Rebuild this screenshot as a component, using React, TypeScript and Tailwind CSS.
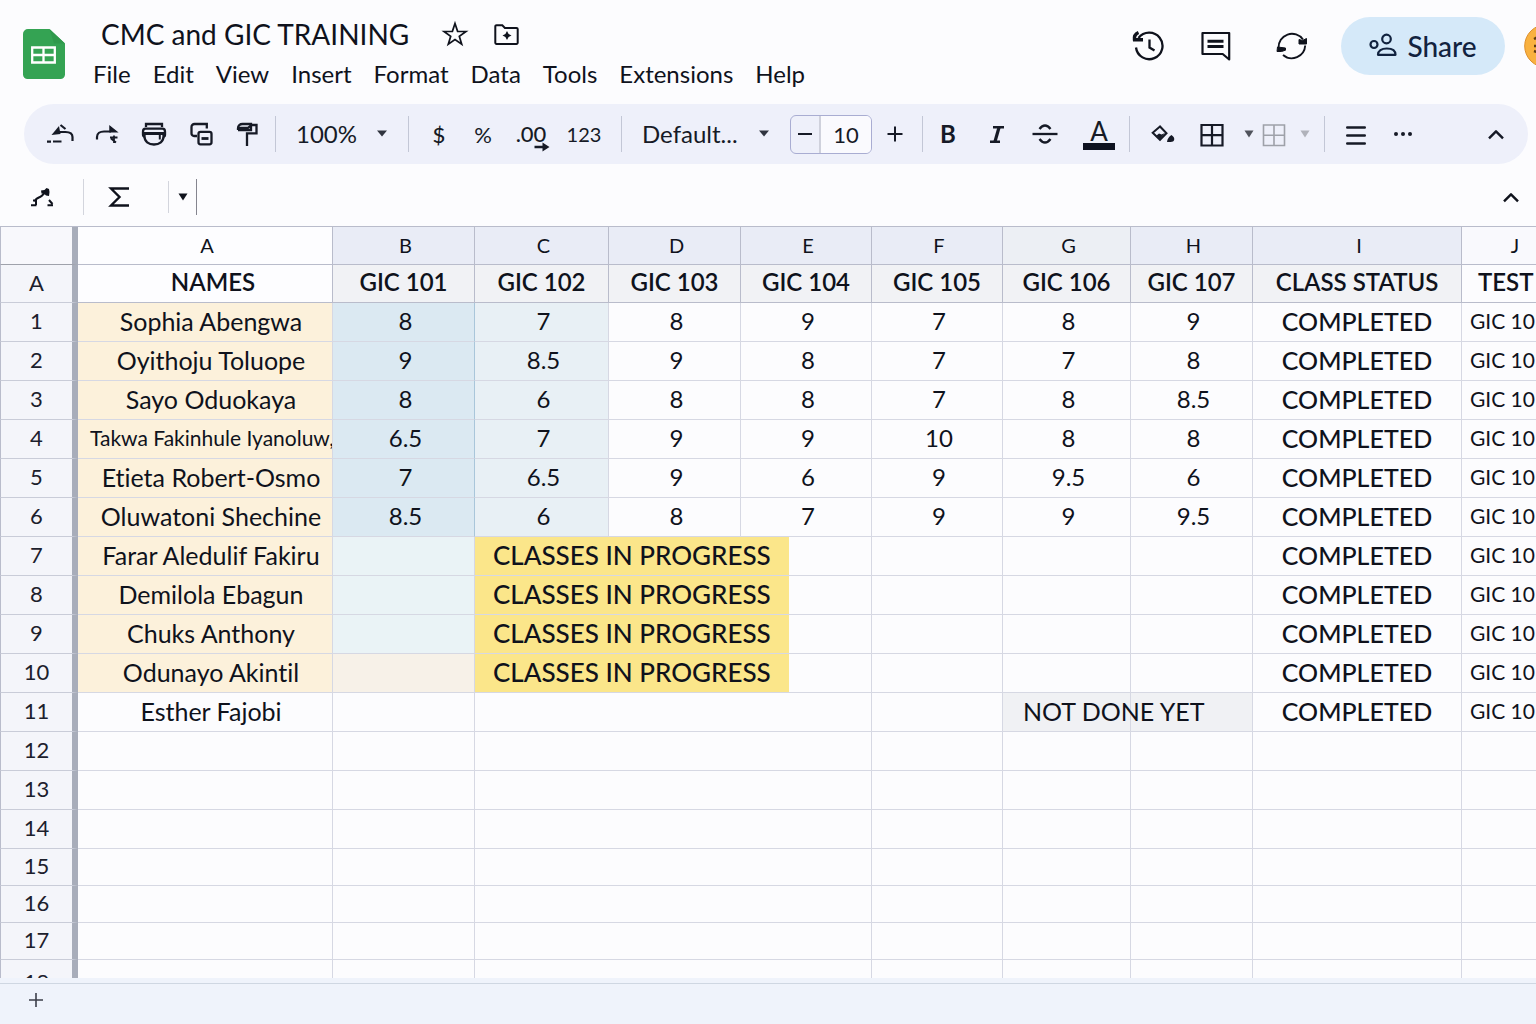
import type { ReactNode } from "react";
import { clsx } from "clsx";

const menus = ["File", "Edit", "View", "Insert", "Format", "Data", "Tools", "Extensions", "Help"];

const columns = [
  { letter: "A", title: "NAMES", width: "w-[255px]" },
  { letter: "B", title: "GIC 101", width: "w-[142px]" },
  { letter: "C", title: "GIC 102", width: "w-[134px]" },
  { letter: "D", title: "GIC 103", width: "w-[132px]" },
  { letter: "E", title: "GIC 104", width: "w-[131px]" },
  { letter: "F", title: "GIC 105", width: "w-[131px]" },
  { letter: "G", title: "GIC 106", width: "w-[128px]" },
  { letter: "H", title: "GIC 107", width: "w-[122px]" },
  { letter: "I", title: "CLASS STATUS", width: "w-[209px]" },
];

const graded = [
  { name: "Sophia Abengwa", scores: ["8", "7", "8", "9", "7", "8", "9"] },
  { name: "Oyithoju Toluope", scores: ["9", "8.5", "9", "8", "7", "7", "8"] },
  { name: "Sayo Oduokaya", scores: ["8", "6", "8", "8", "7", "8", "8.5"] },
  { name: "Takwa Fakinhule Iyanoluw,", scores: ["6.5", "7", "9", "9", "10", "8", "8"], long: true },
  { name: "Etieta Robert-Osmo", scores: ["7", "6.5", "9", "6", "9", "9.5", "6"] },
  { name: "Oluwatoni Shechine", scores: ["8.5", "6", "8", "7", "9", "9", "9.5"] },
];

const inProgress = ["Farar Aledulif Fakiru", "Demilola Ebagun", "Chuks Anthony", "Odunayo Akintil"];

const emptyRows = [12, 13, 14, 15, 16, 17, 18];

function Divider() {
  return <span className="h-9 w-px shrink-0 bg-[#c3c7d6]" />;
}

function Caret({ className }: { className?: string }) {
  return (
    <svg width="12" height="7" viewBox="0 0 12 7" className={className} aria-hidden="true">
      <path d="M1 0.5h10L6 6.5z" fill="currentColor" />
    </svg>
  );
}

function SmallCaret() {
  return (
    <svg width="10" height="8" viewBox="0 0 10 8" aria-hidden="true">
      <path d="M0.5 0.5h9L5 7.5z" fill="currentColor" />
    </svg>
  );
}

function ToolButton({ label, className, children }: { label: string; className: string; children: ReactNode }) {
  return (
    <button type="button" aria-label={label} className={clsx("flex h-10 shrink-0 items-center justify-center", className)}>
      {children}
    </button>
  );
}

function ToolSelect({ label, value }: { label: string; value: string }) {
  return (
    <div className="relative flex-1">
      <select aria-label={label} className="w-full appearance-none bg-transparent pl-5 text-2xl outline-none">
        <option>{value}</option>
      </select>
      <Caret className="pointer-events-none absolute top-3 right-5 text-[#30343f]" />
    </div>
  );
}

function GridIcon({ stroke }: { stroke: number }) {
  return (
    <svg width="24" height="26" viewBox="0 0 24 26" fill="none" stroke="currentColor" strokeWidth={stroke} aria-hidden="true">
      <path d="M1.5 4h21v20.500h-21zM12 4v20.500M1.500 14.200h21" />
    </svg>
  );
}

function ChevronUp() {
  return (
    <svg width="18" height="12" viewBox="0 0 18 12" fill="none" stroke="currentColor" strokeWidth="2.400" aria-hidden="true">
      <path d="M2 10.300L9 3.300l7 7" strokeLinejoin="round" />
    </svg>
  );
}

function Header() {
  return (
    <header className="flex h-[104px] shrink-0 items-start justify-between overflow-hidden pl-[23px]">
      <div className="flex">
        <svg width="42" height="50" viewBox="0 0 42 50" className="mt-[29px] shrink-0" aria-label="Sheets">
          <path d="M5 0h21.500L42 14.500V45.500a4.500 4.500 0 0 1-4.500 4.500H4.500A4.500 4.500 0 0 1 0 45.500V5a5 5 0 0 1 5-5z" fill="#34a353" />
          <path d="M26.500 0L42 14.500H31z" fill="#2f994c" />
          <path d="M9.200 18.500h22.600v15H9.200zM20.500 18.500v15M9.200 26H31.800" fill="none" stroke="#fff" strokeWidth="2.300" />
        </svg>
        <div className="ml-7 pt-4">
          <div className="flex items-center gap-8 pl-2">
            <h1 className="text-[28px] leading-9">CMC and GIC TRAINING</h1>
            <div className="flex gap-6">
              <button type="button" aria-label="Star">
                <svg width="28" height="28" viewBox="0 0 28 28" fill="none" stroke="currentColor" strokeWidth="1.700" aria-hidden="true">
                  <path d="M14 3.500l2.600 7.800 8.400.200-6.700 4.800 2.400 7.900L14 19.500l-6.700 4.700 2.400-7.900L3 11.500l8.400-.200z" />
                </svg>
              </button>
              <button type="button" aria-label="Move">
                <svg width="28" height="28" viewBox="0 0 28 28" fill="none" stroke="currentColor" strokeWidth="2" aria-hidden="true">
                  <path d="M3.500 5.200h5.800l2.600 2.700h11.600a1.200 1.200 0 0 1 1.200 1.200v13.700a1.200 1.200 0 0 1-1.200 1.200h-20a1.200 1.200 0 0 1-1.200-1.200v-16.400a1.200 1.200 0 0 1 1.200-1.200z" />
                  <path d="M14 11l1.600 2.900 2.900 1.600-2.900 1.600-1.600 2.900-1.600-2.900-2.900-1.600 2.900-1.600z" fill="currentColor" stroke="none" />
                </svg>
              </button>
            </div>
          </div>
          <nav className="mt-1 flex gap-[22px] text-2xl leading-9">
            {menus.map((item) => (
              <button type="button" key={item}>
                {item}
              </button>
            ))}
          </nav>
        </div>
      </div>

      <div className="flex shrink-0 items-center pt-[17px]">
        <button type="button" aria-label="Version history">
          <svg width="34" height="32" viewBox="0 0 34 32" fill="none" stroke="currentColor" strokeWidth="2.300" aria-hidden="true">
            <path d="M7.500 8A13.300 13.300 0 1 1 5 17.500" />
            <path d="M7.500 2.500C4 4 3 6.500 3.500 9.800h8.500" strokeWidth="3.400" />
            <path d="M18.500 9.500v8l5 3" />
          </svg>
        </button>
        <button type="button" aria-label="Comments" className="ml-[34px]">
          <svg width="32" height="32" viewBox="0 0 32 32" fill="none" stroke="currentColor" strokeWidth="2.200" aria-hidden="true">
            <path d="M3.500 3h26.700v26.500l-6.500-5.500H3.500z" strokeLinejoin="round" />
            <path d="M8.500 11.300h16M8.500 16.500h16" strokeWidth="3" />
          </svg>
        </button>
        <button type="button" aria-label="Sync status" className="ml-11">
          <svg width="34" height="32" viewBox="0 0 34 32" fill="none" stroke="currentColor" strokeWidth="1.900" aria-hidden="true">
            <path d="M3.500 18A13.500 13.500 0 0 1 28 9.500M30.200 15.500A13.500 13.500 0 0 1 8 25" />
            <path d="M31.500 8.500v5.500h-7.500v-4.500l3.500 1zM2 21.500l.500-4.500 8 1v2.200l-4 1.300z" fill="currentColor" strokeWidth="1" />
          </svg>
        </button>
        <button
          type="button"
          className="ml-8 flex h-[58px] w-[164px] items-center justify-center gap-2.5 rounded-full bg-[#d5e9f9] text-[28px] font-medium text-[#12233f]"
        >
          <svg width="28" height="26" viewBox="0 0 28 26" fill="none" stroke="currentColor" strokeWidth="2.200" aria-hidden="true">
            <circle cx="17.500" cy="6" r="4.300" />
            <circle cx="5" cy="11.500" r="3.500" />
            <path d="M9 21.800c0-4 3.500-6.300 8.800-6.300s8.700 2.300 8.700 6.300z" strokeLinejoin="round" />
          </svg>
          Share
        </button>
        <button type="button" aria-label="Account" className="-mr-8 ml-[19px]">
          <svg width="44" height="44" viewBox="0 0 44 44" aria-hidden="true">
            <circle cx="22" cy="22" r="21.300" fill="#f9b13f" stroke="#dd8f2c" />
            <path d="M10 15l3-1.500M10 22h3M10 27l4 1.500" stroke="#5c3a12" strokeWidth="2.500" />
          </svg>
        </button>
      </div>
    </header>
  );
}

function Toolbar() {
  return (
    <div className="mr-2 ml-6 flex h-[60px] shrink-0 items-center rounded-full bg-[#eef0fa] pl-3 text-[#161a26]">
      <ToolButton label="Undo" className="w-[47px]">
        <svg width="28" height="22" viewBox="0 0 28 22" fill="none" stroke="currentColor" strokeWidth="2.200" aria-hidden="true">
          <path d="M11 9h8.500c4.500 0 7 2 7 5v4" />
          <path d="M5.500 12L13 3l1.500 8z" fill="currentColor" stroke="none" />
          <path d="M14.500 2l5 4M1 18.700h4M7 18.500h8.500" />
        </svg>
      </ToolButton>
      <ToolButton label="Redo" className="w-[47px]">
        <svg width="24" height="22" viewBox="0 0 24 22" fill="none" stroke="currentColor" strokeWidth="2.200" aria-hidden="true">
          <path d="M2 16.500v-2.500c0-3.500 3-5.500 7-5.500h7" />
          <path d="M15 3.500l6.500 5.300H15z" fill="currentColor" strokeWidth="1.500" />
          <path d="M15 14.500h7.500M19 12.500v7.500M16 15.500l5 4" strokeWidth="1.800" />
        </svg>
      </ToolButton>
      <ToolButton label="Print" className="w-[47px]">
        <svg width="26" height="24" viewBox="0 0 26 24" fill="none" stroke="currentColor" strokeWidth="2.300" aria-hidden="true">
          <path d="M5 5V2h16v3" />
          <path d="M4.500 6.700h17c1.700 0 2.500 1.300 2.500 3v3c0 1.300-.700 2-2 2M4 14.700c-1.300 0-2-.700-2-2v-3c0-1.700.800-3 2.500-3" />
          <path d="M2.500 11.500h21" strokeWidth="3" />
          <path d="M3.500 12v2.500c0 4.800 4 8 9.500 8s9.500-3.200 9.500-8V12" />
          <path d="M18.800 12.500v5" strokeWidth="2" />
        </svg>
      </ToolButton>
      <ToolButton label="Copy" className="w-[47px]">
        <svg width="24" height="24" viewBox="0 0 24 24" fill="none" stroke="currentColor" strokeWidth="2.300" aria-hidden="true">
          <path d="M8 14H5a2.500 2.500 0 0 1-2.500-2.500V5A3 3 0 0 1 5.500 2h12.300v4.500" />
          <rect x="9.500" y="9.800" width="13" height="12.500" rx="2" />
          <path d="M12.500 16.500h7" strokeWidth="2.800" />
        </svg>
      </ToolButton>
      <ToolButton label="Paint format" className="w-[47px]">
        <svg width="26" height="24" viewBox="0 0 26 24" fill="none" stroke="currentColor" strokeWidth="2.300" aria-hidden="true">
          <path d="M3 8V6.300C3 3.500 5 2 7.500 2H16v6H3" />
          <path d="M16 3h5.500v8.300H12V24M4 5.800h9l3-2.300" />
        </svg>
      </ToolButton>
      <span className="w-1 shrink-0" />
      <Divider />
      <div className="flex w-[132px] shrink-0">
        <ToolSelect label="Zoom" value="100%" />
      </div>
      <Divider />
      <span className="w-2 shrink-0" />
      <ToolButton label="Format as currency" className="w-11">
        <span className="text-[22px] font-medium">$</span>
      </ToolButton>
      <ToolButton label="Format as percent" className="w-11">
        <span className="text-[22px]">%</span>
      </ToolButton>
      <ToolButton label="Decimal places" className="w-[52px]">
        <span className="relative text-[22px] leading-9 font-medium">
          .00
          <svg width="16" height="10" viewBox="0 0 16 10" className="absolute -right-1 bottom-0" aria-hidden="true">
            <path d="M0.500 3.800h8V0.500L15.500 5l-7 4.500V6.200h-8z" fill="currentColor" />
          </svg>
        </span>
      </ToolButton>
      <ToolButton label="More formats" className="w-[54px]">
        <span className="text-xl">123</span>
      </ToolButton>
      <span className="w-2.5 shrink-0" />
      <Divider />
      <div className="flex w-[168px] shrink-0">
        <ToolSelect label="Font" value="Default..." />
      </div>
      <div className="flex h-[39px] w-[82px] shrink-0 overflow-hidden rounded-md border border-[#a9add2]">
        <button type="button" aria-label="Decrease font size" className="flex w-[30px] items-center justify-center border-r-2 border-[#cfd1dc]">
          <svg width="14" height="2" viewBox="0 0 14 2" aria-hidden="true">
            <path d="M0 1h14" stroke="currentColor" strokeWidth="2" />
          </svg>
        </button>
        <input aria-label="Font size" defaultValue="10" className="w-0 flex-1 bg-[#fafafe] text-center text-[22px] outline-none" />
      </div>
      <ToolButton label="Increase font size" className="mr-1 w-[46px]">
        <svg width="16" height="16" viewBox="0 0 16 16" stroke="currentColor" strokeWidth="2" aria-hidden="true">
          <path d="M0.500 8h15M8 0.500v15" />
        </svg>
      </ToolButton>
      <Divider />
      <ToolButton label="Bold" className="w-[50px]">
        <span className="text-2xl font-bold">B</span>
      </ToolButton>
      <ToolButton label="Italic" className="w-12">
        <svg width="16" height="18" viewBox="0 0 16 18" fill="none" stroke="currentColor" strokeWidth="2.600" aria-hidden="true">
          <path d="M4 2.300h11M1 16.700h10" />
          <path d="M10 2.500L6 16.500" strokeWidth="3.200" />
        </svg>
      </ToolButton>
      <ToolButton label="Strikethrough" className="w-12">
        <svg width="26" height="22" viewBox="0 0 26 22" fill="none" stroke="currentColor" strokeWidth="2.300" aria-hidden="true">
          <path d="M0.500 11h25" />
          <path d="M7.500 6c2-2.800 3.800-3.500 5.500-3.500s3.500.700 5.500 3.500M7.500 16c2 2.800 3.800 3.500 5.500 3.500s3.500-.700 5.500-3.500" />
        </svg>
      </ToolButton>
      <ToolButton label="Text color" className="w-[60px]">
        <span className="flex flex-col items-center">
          <span className="text-[26px] leading-6">A</span>
          <span className="h-[7px] w-8 bg-[#0e1220]" />
        </span>
      </ToolButton>
      <Divider />
      <ToolButton label="Fill color" className="w-[66px]">
        <svg width="24" height="18" viewBox="0 0 24 18" aria-hidden="true">
          <path d="M9 1.500L1.700 7.800l7.300 7 6.500-6.500z" fill="none" stroke="currentColor" strokeWidth="2" />
          <path d="M5.500 10.500l2.500-2 2.500 1 3.500-1.500-5 6z" fill="currentColor" />
          <path d="M20.500 10c2.200 1.500 3 3.200 2.700 4.800-.300 1.700-1.700 2.200-3.500 2.200H16c.300-3 2-5.500 4.500-7z" fill="currentColor" />
        </svg>
      </ToolButton>
      <ToolButton label="Borders" className="w-8">
        <GridIcon stroke={2.2} />
      </ToolButton>
      <ToolButton label="Border options" className="ml-2 w-[26px] text-[#50535c]">
        <SmallCaret />
      </ToolButton>
      <ToolButton label="Merge cells" className="w-6 text-[#9ea1a9]">
        <GridIcon stroke={1.6} />
      </ToolButton>
      <ToolButton label="Merge options" className="ml-1 w-[30px] text-[#b0b2ba]">
        <SmallCaret />
      </ToolButton>
      <span className="w-1 shrink-0" />
      <Divider />
      <ToolButton label="Align" className="w-[62px]">
        <svg width="20" height="22" viewBox="0 0 20 22" stroke="currentColor" strokeWidth="2.400" strokeLinecap="round" aria-hidden="true">
          <path d="M1.200 4.500h17.600M1.200 12.500h17.600M1.200 20.500h17.600" />
        </svg>
      </ToolButton>
      <ToolButton label="More" className="w-8">
        <svg width="18" height="4" viewBox="0 0 18 4" fill="currentColor" aria-hidden="true">
          <circle cx="2" cy="2" r="2" />
          <circle cx="9" cy="2" r="2" />
          <circle cx="16" cy="2" r="2" />
        </svg>
      </ToolButton>
      <ToolButton label="Hide menus" className="ml-auto w-16">
        <ChevronUp />
      </ToolButton>
    </div>
  );
}

function FormulaBar() {
  return (
    <div className="flex h-[62px] shrink-0 items-center pt-1">
      <button type="button" aria-label="Named ranges" className="flex w-[83px] items-center justify-center">
        <svg width="24" height="20" viewBox="0 0 24 20" fill="none" stroke="currentColor" strokeWidth="2" aria-hidden="true">
          <path d="M5 14.500c.500-3 2.500-3.500 5-4.500s3-2.500 5-4.500" />
          <path d="M11 3.500l3.500-.500L16.500 1l2.500 1 .500 3-.500 4-3-.500-1.500-1.500-3-.500z" fill="currentColor" stroke="none" />
          <path d="M1 18.200h5.500M3 13.500h3V18M17.500 18.200H23M19 13l3.500 4" />
        </svg>
      </button>
      <span className="h-9 w-px bg-[#d3d5dd]" />
      <button type="button" aria-label="Functions" className="flex w-[69px] items-center justify-center">
        <svg width="22" height="20" viewBox="0 0 22 20" fill="none" stroke="currentColor" strokeWidth="2.400" aria-hidden="true">
          <path d="M21 1.500H3l8.500 8.500L3 18.500h18" />
        </svg>
      </button>
      <span className="ml-[15px] h-8 w-px bg-[#d3d5dd]" />
      <button type="button" aria-label="Function list" className="flex w-[27px] items-center justify-center">
        <SmallCaret />
      </button>
      <span className="h-9 w-px bg-[#85858f]" />
      <input aria-label="Formula" className="h-9 min-w-0 flex-1 px-3 text-xl outline-none" />
      <button type="button" aria-label="Collapse formula bar" className="flex w-[50px] items-center justify-center">
        <ChevronUp />
      </button>
    </div>
  );
}

function Cell({ className, colSpan, children }: { className?: string; colSpan?: number; children?: ReactNode }) {
  return (
    <td colSpan={colSpan} className={clsx("border-b border-[#d6d8e3] pb-[3px] text-center whitespace-nowrap", className)}>
      {children}
    </td>
  );
}

function RowHead({ label, clipped }: { label: string | number; clipped?: boolean }) {
  return (
    <th
      scope="row"
      className={clsx(
        "border-r-[6px] border-b border-l border-r-[#a8adba] border-b-[#c9ccd8] border-l-[#b9bccb] bg-[#f4f5fa] pb-0.5 text-[22px] font-normal text-[#1c202c]",
        clipped && "h-[46px]",
      )}
    >
      {label}
    </th>
  );
}

function Status() {
  return (
    <>
      <Cell className="border-r text-[25px] font-medium">COMPLETED</Cell>
      <Cell className="pl-2 text-left text-[21px]">GIC 10</Cell>
    </>
  );
}

function Sheet() {
  return (
    <main className="min-h-0 flex-1 overflow-hidden">
      <table className="w-full table-fixed border-separate border-spacing-0 border-t border-[#b9bccb] text-2xl leading-8">
        <colgroup>
          <col className="w-[78px]" />
          {columns.map((col) => (
            <col key={col.letter} className={col.width} />
          ))}
          <col />
        </colgroup>
        <thead>
          <tr className="h-[38px] text-xl">
            <th className="border-r-[6px] border-b border-l border-r-[#a8adba] border-b-[#9fa2ab] border-l-[#b9bccb] bg-[#f8f8fc]" />
            {columns.map((col) => (
              <th
                key={col.letter}
                scope="col"
                className={clsx(
                  "border-r border-b border-[#b9bccb] pb-0.5 pl-1 font-normal",
                  col.letter === "A" ? "bg-[#fdfdff]" : col.letter === "G" ? "bg-[#eceff4]" : "bg-[#e9ecf6]",
                )}
              >
                {col.letter}
              </th>
            ))}
            <th scope="col" className="border-b border-[#b9bccb] bg-[#f9f9fd] pb-0.5 pl-8 font-normal">
              J
            </th>
          </tr>
          <tr className="h-[38px]">
            <RowHead label="A" />
            {columns.map((col) => (
              <th
                key={col.letter}
                className={clsx(
                  "border-r border-b border-[#b9bccb] pb-[3px] font-semibold whitespace-nowrap",
                  col.letter === "A" ? "bg-[#fdfdff] pl-4" : "bg-[#f1f2f5]",
                )}
              >
                {col.title}
              </th>
            ))}
            <th className="border-b border-[#b9bccb] pb-[3px] pl-4 text-left font-semibold">TEST</th>
          </tr>
        </thead>
        <tbody>
          {graded.map((row, i) => (
            <tr key={row.name} className="h-[39px]">
              <RowHead label={i + 1} />
              <Cell
                className={clsx("overflow-hidden border-r bg-[#fcf1db] pl-3", row.long ? "text-left text-[21px]" : "text-[25px]")}
              >
                {row.name}
              </Cell>
              {row.scores.map((score, j) => (
                <Cell
                  key={j}
                  className={clsx("border-r pl-1", j === 0 && "border-r-[#a9c6da] bg-[#dbe9f2]", j === 1 && "bg-[#e8f0f5]")}
                >
                  {score}
                </Cell>
              ))}
              <Status />
            </tr>
          ))}
          {inProgress.map((name, i) => (
            <tr key={name} className="h-[39px]">
              <RowHead label={i + 7} />
              <Cell className="border-r bg-[#fcf1db] pl-3 text-[25px]">{name}</Cell>
              <Cell className={clsx("border-r", i === 3 ? "bg-[#f7f1e8]" : "bg-[#eaf3f6]")} />
              <td colSpan={3} className="border-r border-b border-[#d6d8e3] p-0">
                <div className="flex h-[38px] w-[314px] items-center bg-[#fbe68a] pb-[3px] pl-[18px] text-[26px] font-medium whitespace-nowrap">
                  CLASSES IN PROGRESS
                </div>
              </td>
              <Cell className="border-r" />
              <Cell className="border-r" />
              <Cell className="border-r" />
              <Status />
            </tr>
          ))}
          <tr className="h-[39px]">
            <RowHead label={11} />
            <Cell className="border-r pl-3 text-[25px]">Esther Fajobi</Cell>
            <Cell className="border-r" />
            <Cell colSpan={3} className="border-r" />
            <Cell className="border-r" />
            <Cell className="border-r bg-[#f0f1f4] pl-5 text-left text-[25px]">NOT DONE YET</Cell>
            <Cell className="border-r bg-[#f0f1f4]" />
            <Status />
          </tr>
          {emptyRows.map((n) => (
            <tr key={n} className={n < 15 ? "h-[39px]" : "h-[37px]"}>
              <RowHead label={n} clipped={n === 18} />
              <Cell className="border-r" />
              <Cell className="border-r" />
              <Cell colSpan={3} className="border-r" />
              <Cell className="border-r" />
              <Cell className="border-r" />
              <Cell className="border-r" />
              <Cell className="border-r" />
              <Cell />
            </tr>
          ))}
        </tbody>
      </table>
    </main>
  );
}

export default function App() {
  return (
    <div className="flex h-screen flex-col overflow-hidden bg-[#fcfcfe] font-[Lato,'Liberation_Sans',sans-serif] text-[#0f121c] [font-variant-ligatures:none]">
      <Header />
      <Toolbar />
      <FormulaBar />
      <Sheet />
      <footer className="shrink-0 bg-[#eff3fb]">
        <div className="h-1.5 border-b border-[#cfd7e2]" />
        <div className="flex h-10 items-center pl-[29px]">
          <button type="button" aria-label="Add sheet" className="-mt-2 text-[#3c3f4a]">
            <svg width="14" height="14" viewBox="0 0 14 14" stroke="currentColor" strokeWidth="1.600" aria-hidden="true">
              <path d="M0 7h14M7 0v14" />
            </svg>
          </button>
        </div>
      </footer>
    </div>
  );
}
